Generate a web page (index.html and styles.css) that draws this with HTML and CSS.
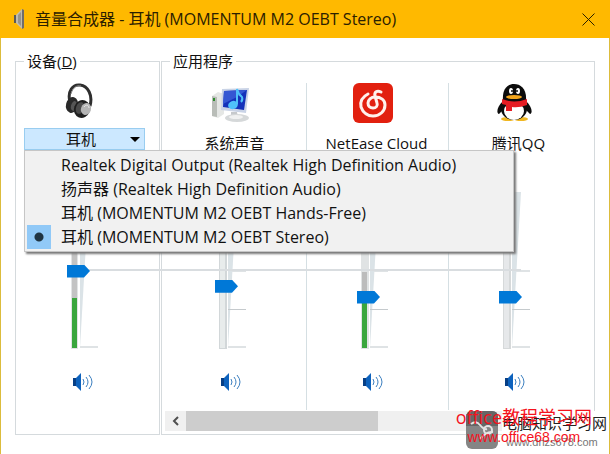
FILE: index.html
```html
<!DOCTYPE html>
<html lang="zh-CN">
<head>
    <meta charset="UTF-8">
    <meta name="viewport" content="width=device-width, initial-scale=1.0">
    <title>音量合成器 - 耳机 (MOMENTUM M2 OEBT Stereo)</title>
    <link rel="stylesheet" href="styles.css">
</head>
<body>
    <div class="window">
        <header class="titlebar">
            <svg class="titlebar-icon" width="14" height="20" viewBox="0 0 14 20" aria-hidden="true">
                <path d="M1 6h4v8H1z" fill="#5c5a56"/>
                <path d="M3 6l6-6v20l-6-6z" fill="#c0bcb0"/>
                <path d="M5 6l3-3v14l-3-3z" fill="#98948a"/>
                <path d="M9 0l2 1v18l-2 1z" fill="#6f6d6a"/>
            </svg>
            <h1>音量合成器 - 耳机 (MOMENTUM M2 OEBT Stereo)</h1>
            <button class="close" type="button" aria-label="关闭">
                <svg width="13" height="13" viewBox="0 0 13 13"><path d="M.5.5l12 12M12.5.5l-12 12" stroke="#2b2000" fill="none"/></svg>
            </button>
        </header>

        <main class="mixer">
            <div class="master-line"></div>

            <fieldset class="group device">
                <legend>设备(<u>D</u>)</legend>
                <div class="channel">
                    <svg class="icon" width="40" height="40" viewBox="3 1 40 40" aria-hidden="true">
                        <path d="M10 20C7 9 13 2 20 3c8 1 13 10 10 21" fill="none" stroke="#2e2e2e" stroke-width="3"/>
                        <path d="M11 12C13 5 17 3 21 4" fill="none" stroke="#8b8b8b"/>
                        <ellipse cx="12" cy="23" rx="6" ry="8" fill="#292929" transform="rotate(15 12 23)"/>
                        <ellipse cx="14" cy="24" rx="3" ry="5" fill="#555" transform="rotate(15 14 24)"/>
                        <ellipse cx="22" cy="27" rx="8" ry="9" fill="#1f1f1f" transform="rotate(20 22 27)"/>
                        <ellipse cx="20" cy="26" rx="4" ry="6" fill="#4a4a4a" transform="rotate(20 20 26)"/>
                        <ellipse cx="26" cy="27" rx="5" ry="6" fill="#b5b5b5" transform="rotate(20 26 27)"/>
                        <path d="M24 25c2-3 5-2 5 1" fill="none" stroke="#e8e8e8"/>
                    </svg>
                    <div class="picker">
                        <select aria-label="设备">
                            <option>耳机</option>
                        </select>
                        <div class="menu">
                            <label><input type="radio" name="device"><span>Realtek Digital Output (Realtek High Definition Audio)</span></label>
                            <label><input type="radio" name="device"><span>扬声器 (Realtek High Definition Audio)</span></label>
                            <label><input type="radio" name="device"><span>耳机 (MOMENTUM M2 OEBT Hands-Free)</span></label>
                            <label><input type="radio" name="device" checked><span>耳机 (MOMENTUM M2 OEBT Stereo)</span></label>
                        </div>
                    </div>
                    <div class="fader">
                        <svg width="31" height="166" viewBox="0 0 31 166" aria-hidden="true">
                            <path d="M13 4h9L13 160z" fill="#dbe3e7"/>
                            <path d="M13 159h18" stroke="#dfe3e5" stroke-width="2"/>
                            <path d="M4 4h7v157H4z" fill="#e2e4e5"/>
                            <path d="M5 4h5v106H5z" fill="#c3c3c3"/>
                            <path d="M5 110h5v50H5z" fill="#3aa63d"/>
                        </svg>
                        <input type="range" min="0" max="100" value="50" aria-label="耳机音量">
                    </div>
                    <button class="mute" type="button" aria-label="耳机静音">
                        <svg width="20" height="18" viewBox="0 0 20 18"><path d="M0 5h4v8H0z" fill="#073f86"/><path d="M3 5l5-5v18l-5-5z" fill="#0d62bd"/><path d="M10 6q2 3 0 6M13 4q4 5 0 10M16 2q6 7 0 14" fill="none" stroke="#3c7fc0"/></svg>
                    </button>
                </div>
            </fieldset>

            <fieldset class="group apps">
                <legend>应用程序</legend>
                <div class="app-list">
                    <div class="channel">
                        <svg class="icon" width="40" height="40" viewBox="0 0 40 40" aria-hidden="true">
                            <path d="M1 13l6-4 6 2v20l-6 4-6-2z" fill="#e5e7e5"/>
                            <path d="M1 13l5 1v20l-5-1z" fill="#b9bdb8"/>
                            <path d="M3 15v3" stroke="#2e8b2e" stroke-width="2"/>
                            <path d="M20 29h6l1 5h-7z" fill="#c6c9cc"/>
                            <ellipse cx="26" cy="35" rx="12" ry="4" fill="#d5d8d9"/>
                            <ellipse cx="25" cy="34" rx="7" ry="2" fill="#f0f1f1"/>
                            <path d="M11 6l27-1-3 25-25-3z" fill="#c9d3e6"/>
                            <path d="M13 8l23-1-3 20-21-3z" fill="#1432ba"/>
                            <path d="M13 8l23-1-10 7-14 7z" fill="#3457d3"/>
                            <path d="M26 21V6q1 5 5 8 1 3-1 5" fill="none" stroke="#4fc1fa" stroke-width="2"/>
                            <ellipse cx="22" cy="22" rx="5" ry="4" fill="#4fc1fa" transform="rotate(-20 22 22)"/>
                        </svg>
                        <div class="name">系统声音</div>
                        <div class="fader">
                            <svg width="31" height="166" viewBox="0 0 31 166" aria-hidden="true">
                                <path d="M13 4h9L13 160z" fill="#dbe3e7"/>
                                <path d="M13 159h18M17 83h14" stroke="#dfe3e5" stroke-width="2"/>
                                <path d="M13 121.500h18" stroke="#c5cacd"/>
                                <path d="M4 4h8v157H4z" fill="#d2d7d9"/>
                                <path d="M5 4h5v156H5z" fill="#e8ecec"/>
                            </svg>
                            <input type="range" min="0" max="100" value="40" aria-label="系统声音音量">
                        </div>
                        <button class="mute" type="button" aria-label="系统声音静音">
                            <svg width="20" height="18" viewBox="0 0 20 18"><path d="M0 5h4v8H0z" fill="#073f86"/><path d="M3 5l5-5v18l-5-5z" fill="#0d62bd"/><path d="M10 6q2 3 0 6M13 4q4 5 0 10M16 2q6 7 0 14" fill="none" stroke="#3c7fc0"/></svg>
                        </button>
                    </div>

                    <div class="channel">
                        <svg class="icon" width="40" height="40" viewBox="0 0 40 40" aria-hidden="true">
                            <rect width="40" height="40" rx="6" fill="#e2200f"/>
                            <path d="M15 11C9 14 7 19 8 24c2 6 7 9 12 9 7 0 12-5 12-11 0-5-4-8-10-8-4 0-7 3-7 6 0 3 2 5 5 5 3 0 5-2 4-5l-2-7c-1-4 2-6 6-4" fill="none" stroke="#fff1ec" stroke-width="3" stroke-linecap="round"/>
                        </svg>
                        <div class="name">NetEase Cloud</div>
                        <div class="fader">
                            <svg width="31" height="166" viewBox="0 0 31 166" aria-hidden="true">
                                <path d="M13 4h9L13 160z" fill="#dbe3e7"/>
                                <path d="M13 159h18M17 83h14" stroke="#dfe3e5" stroke-width="2"/>
                                <path d="M13 121.500h18" stroke="#c5cacd"/>
                                <path d="M4 4h8v157H4z" fill="#e0e3e4"/>
                                <path d="M5 84h5v24H5z" fill="#bcbcbc"/>
                                <path d="M5 108h5v52H5z" fill="#3aa63d"/>
                            </svg>
                            <input type="range" min="0" max="100" value="33" aria-label="NetEase Cloud 音量">
                        </div>
                        <button class="mute" type="button" aria-label="NetEase Cloud 静音">
                            <svg width="20" height="18" viewBox="0 0 20 18"><path d="M0 5h4v8H0z" fill="#073f86"/><path d="M3 5l5-5v18l-5-5z" fill="#0d62bd"/><path d="M10 6q2 3 0 6M13 4q4 5 0 10M16 2q6 7 0 14" fill="none" stroke="#3c7fc0"/></svg>
                        </button>
                    </div>

                    <div class="channel">
                        <svg class="icon" width="40" height="40" viewBox="1 0 40 40" aria-hidden="true">
                            <ellipse cx="14" cy="36" rx="7" ry="2" fill="#f0b722"/>
                            <ellipse cx="27" cy="36" rx="7" ry="2" fill="#f0b722"/>
                            <path d="M9 18C3 24 2 30 5 31l4-4zM32 18c6 6 7 12 4 13l-4-4z" fill="#0c0c0c"/>
                            <ellipse cx="20" cy="26" rx="13" ry="11" fill="#0c0c0c"/>
                            <path d="M9 18C8 6 13 1 20 1s13 5 12 17z" fill="#0c0c0c"/>
                            <ellipse cx="20" cy="28" rx="10" ry="9" fill="#fff"/>
                            <ellipse cx="17" cy="8" rx="2" ry="3" fill="#fff"/>
                            <ellipse cx="24" cy="8" rx="2" ry="3" fill="#fff"/>
                            <circle cx="18" cy="8" r="1" fill="#111"/>
                            <circle cx="23" cy="8" r="1" fill="#111"/>
                            <ellipse cx="20" cy="14" rx="8" ry="2" fill="#f3a51c"/>
                            <path d="M8 16q12 5 25 0v6q-8 3-15 2v4h-6v-6l-4-1z" fill="#e51c23"/>
                        </svg>
                        <div class="name">腾讯QQ</div>
                        <div class="fader">
                            <svg width="31" height="166" viewBox="0 0 31 166" aria-hidden="true">
                                <path d="M13 4h9L13 160z" fill="#dbe3e7"/>
                                <path d="M13 159h18M17 83h14" stroke="#dfe3e5" stroke-width="2"/>
                                <path d="M13 121.500h18" stroke="#c5cacd"/>
                                <path d="M4 4h8v157H4z" fill="#d6d9da"/>
                                <path d="M5 4h5v156H5z" fill="#e6e8ea"/>
                            </svg>
                            <input type="range" min="0" max="100" value="33" aria-label="腾讯QQ音量">
                        </div>
                        <button class="mute" type="button" aria-label="腾讯QQ静音">
                            <svg width="20" height="18" viewBox="0 0 20 18"><path d="M0 5h4v8H0z" fill="#073f86"/><path d="M3 5l5-5v18l-5-5z" fill="#0d62bd"/><path d="M10 6q2 3 0 6M13 4q4 5 0 10M16 2q6 7 0 14" fill="none" stroke="#3c7fc0"/></svg>
                        </button>
                    </div>
                </div>

                <div class="scrollbar">
                    <button type="button" aria-label="向左滚动">
                        <svg width="8" height="10" viewBox="0 0 8 10"><path d="M6 1L2 5l4 4" fill="none" stroke="#505050" stroke-width="2"/></svg>
                    </button>
                    <div class="scroll-thumb"></div>
                </div>
            </fieldset>
        </main>

        <div class="site-mark">
            <svg width="32" height="38" viewBox="0 0 32 38" aria-hidden="true">
                <rect width="32" height="38" rx="6" fill="#858585"/>
                <path d="M0 15V6q0-6 6-6h20q6 0 6 6v9z" fill="#666"/>
                <path d="M5 13q5-4 9 1t7 4M14 28q6-8 13-7" fill="none" stroke="#e4e4e4" stroke-width="2"/>
                <circle cx="22" cy="19" r="4" fill="none" stroke="#e4e4e4" stroke-width="2"/>
            </svg>
            <div class="site-text">
                <strong>电脑知识学习网</strong>
                <span>www.dnzs678.com</span>
            </div>
        </div>
        <div class="office-mark">
            <strong>office教程学习网</strong>
            <span>www.office68.com</span>
        </div>
    </div>
</body>
</html>
```
FILE: styles.css
```css
* {
    box-sizing: border-box;
}
body {
    margin: 0;
    font-family: "Open Sans", "Noto Sans CJK SC", sans-serif;
    font-size: 15px;
    line-height: 20px;
    color: #111;
}
button {
    border: none;
    padding: 0;
    background: none;
}
svg {
    display: block;
}
.window {
    position: relative;
    display: flex;
    flex-direction: column;
    min-height: 100vh;
    background: #fff;
    border: 1px solid #dcbc3c;
    border-top: none;
}
.titlebar {
    display: flex;
    align-items: center;
    height: 38px;
    margin: 0 -1px;
    padding: 0 15px 0 13px;
    background: #ffb900;
}
.titlebar h1 {
    flex: 1;
    margin: 0 0 0 8px;
    font-size: 16px;
    font-weight: normal;
    color: #2b2000;
}
.mixer {
    position: relative;
    flex: 1;
    display: flex;
    gap: 1px;
    padding: 13px 14px 19px;
}
.group {
    min-width: 0;
    margin: 0;
    padding: 0;
    border: 1px solid #d5dadd;
}
.group legend {
    margin-left: 8px;
    padding: 0 3px;
}
.device {
    width: 145px;
}
.apps {
    flex: 1;
}
.app-list {
    display: grid;
    grid-template-columns: repeat(3, 1fr);
    padding: 0 4px 0 2px;
}
.channel {
    display: grid;
    grid-template-rows: 40px 65px 166px 56px;
    justify-items: center;
    margin-top: 12px;
    padding-right: 10px;
}
.app-list .channel {
    border-left: 1px solid #d5dfe3;
}
.app-list .channel:first-child {
    border-color: transparent;
}
.name {
    margin: 10px -8px 0 0;
}

/* device drop-down */
.picker {
    position: relative;
    width: 121px;
    height: 22px;
    margin: 5px -4px 0 0;
}
.picker select {
    appearance: none;
    width: 100%;
    height: 22px;
    padding: 0 7px 0 0;
    border: 1px solid #99cdf0;
    border-radius: 0;
    background: #cce8ff;
    font: inherit;
    color: #111;
    text-align-last: center;
}
.picker::after {
    content: "";
    position: absolute;
    right: 5px;
    top: 9px;
    border: 5px solid transparent;
    border-top-color: #000;
    border-bottom: none;
}
.menu {
    position: absolute;
    z-index: 3;
    top: 22px;
    left: 0;
    width: 490px;
    padding: 2px;
    background: #f1f1f1;
    border: 1px solid #c6c6c6;
    box-shadow: 2px 2px 2px #777;
    font-size: 16px;
}
.menu label {
    display: flex;
    align-items: center;
    gap: 10px;
    height: 24px;
    white-space: nowrap;
}
.menu input {
    appearance: none;
    width: 24px;
    height: 24px;
    margin: 0;
}
.menu input:checked {
    background: radial-gradient(circle, #1f3442 4px, #91c9f7 5px);
}

/* volume sliders */
.fader {
    display: grid;
}
.fader svg,
.fader input {
    grid-area: 1 / 1;
}
.fader input {
    appearance: none;
    position: relative;
    z-index: 2;
    writing-mode: vertical-lr;
    direction: rtl;
    width: 23px;
    height: 166px;
    margin: 0;
    background: none;
}
.fader input::-webkit-slider-thumb {
    appearance: none;
    width: 23px;
    height: 13px;
    background: #0078d7;
    clip-path: polygon(0 0, 17px 0, 100% 50%, 17px 100%, 0 100%);
}
.master-line {
    position: absolute;
    z-index: 1;
    left: 80px;
    right: 88px;
    top: 231px;
    height: 2px;
    background: #d9dde0;
}
.mute {
    align-self: center;
}

.scrollbar {
    display: flex;
    height: 20px;
    margin: 1px 3px 3px;
    background: #f0f0f0;
}
.scrollbar button {
    display: grid;
    place-items: center;
    width: 21px;
}
.scroll-thumb {
    width: 45%;
    background: #cdcdcd;
}

/* site marks over the corner */
.site-mark {
    position: absolute;
    z-index: 4;
    right: 2px;
    bottom: 5px;
    display: flex;
    gap: 4px;
}
.site-text,
.office-mark {
    display: flex;
    flex-direction: column;
    white-space: nowrap;
}
.site-text {
    background: #fff;
}
.site-text strong {
    font-weight: normal;
    line-height: 24px;
    color: #222;
}
.site-text span {
    padding-left: 4px;
    font: 11px/14px "Liberation Sans", sans-serif;
    color: #777;
}
.office-mark {
    position: absolute;
    z-index: 5;
    right: 17px;
    bottom: 8px;
    align-items: center;
    color: #f5121d;
}
.office-mark strong {
    font-size: 18px;
    font-weight: normal;
    line-height: 22px;
}
.office-mark span {
    font: 14px/18px "Liberation Sans", sans-serif;
}
```
